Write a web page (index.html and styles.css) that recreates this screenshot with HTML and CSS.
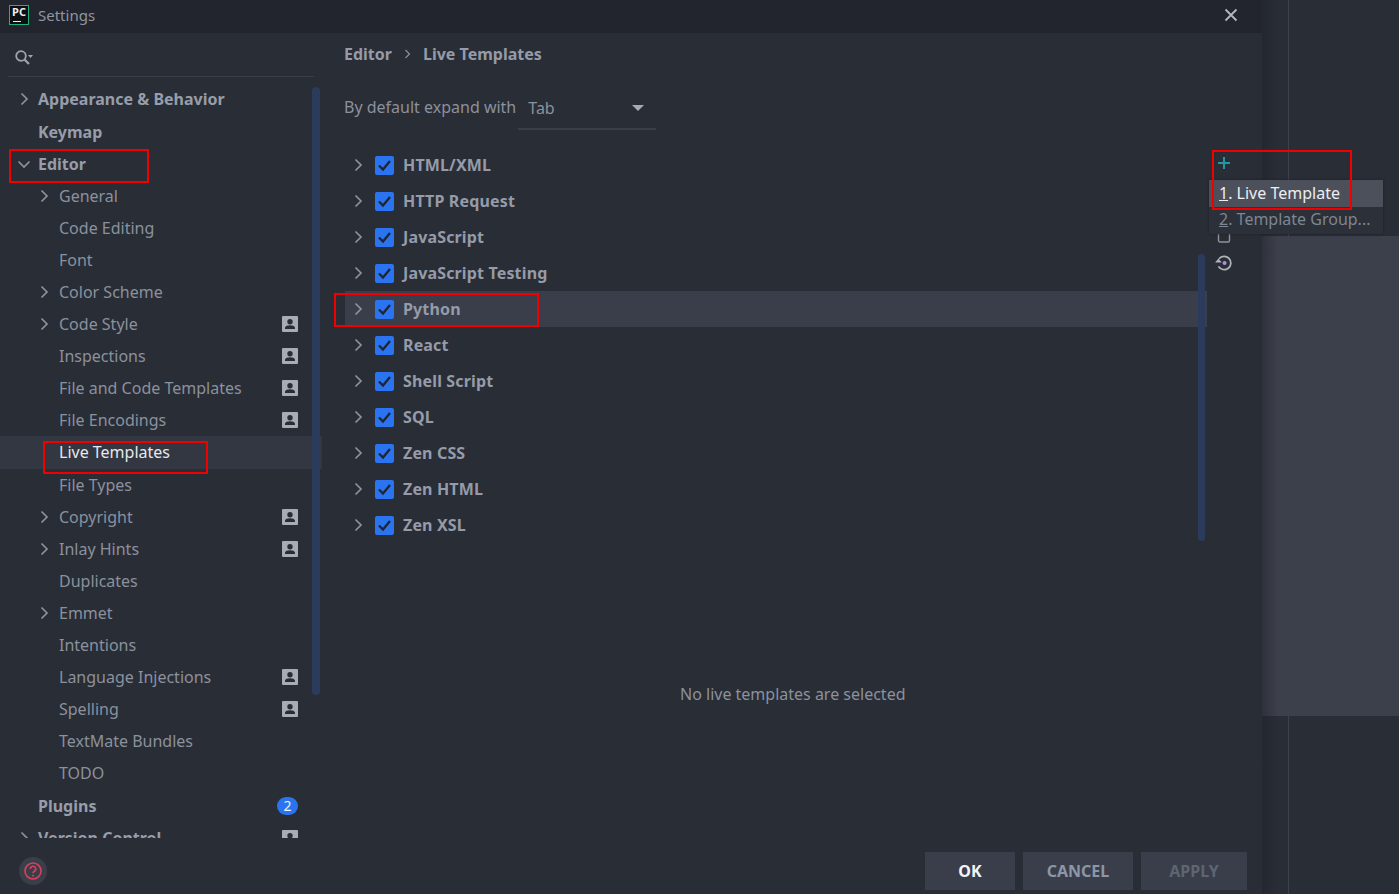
FILE: index.html
```html
<!DOCTYPE html>
<html lang="en">
<head>
  <meta charset="UTF-8" />
  <title>Settings</title>
  <link rel="stylesheet" href="styles.css">
</head>
<body>
  <svg class="defs" width="0" height="0">
    <symbol id="right" viewBox="0 0 10 14"><path d="M2.5 1.5 8 7l-5.500 5.500" fill="none" stroke="currentColor" stroke-width="1.700"/></symbol>
    <symbol id="down" viewBox="0 0 14 10"><path d="M1.500 2.500 7 8l5.500-5.500" fill="none" stroke="currentColor" stroke-width="1.700"/></symbol>
    <symbol id="user" viewBox="0 0 16 16"><path fill="#a9adb3" fill-rule="evenodd" d="M1 0h14a1 1 0 0 1 1 1v14a1 1 0 0 1-1 1H1a1 1 0 0 1-1-1V1a1 1 0 0 1 1-1zm7 3a2.700 2.700 0 1 0 0 5.400A2.700 2.700 0 0 0 8 3zM3 13h10v-1.200c0-1.700-2.500-2.500-5-2.500s-5 .8-5 2.500z"/></symbol>
    <symbol id="check" viewBox="0 0 19 19"><rect width="19" height="19" rx="2" fill="#2b74f1"/><path d="M4 9.500 8 13.500l7-8.500" fill="none" stroke="#1f2530" stroke-width="2.300"/></symbol>
  </svg>

  <div class="dialog">
    <div class="titlebar">
      <div class="logo"><span>PC</span><i></i></div>
      <span class="title">Settings</span>
      <svg class="close" width="14" height="14" viewBox="0 0 14 14"><path d="M1.500 1.500l11 11M12.500 1.500l-11 11" stroke="#b4b8be" stroke-width="1.800"/></svg>
    </div>

    <div class="body">
      <aside class="sidebar">
        <div class="search">
          <svg width="20" height="18" viewBox="0 0 20 18"><circle cx="7" cy="7" r="4.800" fill="none" stroke="#a0a5ad" stroke-width="1.800"/><path d="M10.500 10.500 15 15" stroke="#a0a5ad" stroke-width="2.200"/><path d="M14 6h5l-2.500 3z" fill="#a0a5ad"/></svg>
        </div>
        <div class="tree">
          <div class="node top"><svg class="arrow"><use href="#right"/></svg><span>Appearance &amp; Behavior</span></div>
          <div class="node top"><i class="arrow"></i><span>Keymap</span></div>
          <div class="node top"><svg class="arrow open"><use href="#down"/></svg><span>Editor</span></div>
          <div class="node"><svg class="arrow"><use href="#right"/></svg><span>General</span></div>
          <div class="node"><i class="arrow"></i><span>Code Editing</span></div>
          <div class="node"><i class="arrow"></i><span>Font</span></div>
          <div class="node"><svg class="arrow"><use href="#right"/></svg><span>Color Scheme</span></div>
          <div class="node"><svg class="arrow"><use href="#right"/></svg><span>Code Style</span><svg class="scope"><use href="#user"/></svg></div>
          <div class="node"><i class="arrow"></i><span>Inspections</span><svg class="scope"><use href="#user"/></svg></div>
          <div class="node"><i class="arrow"></i><span>File and Code Templates</span><svg class="scope"><use href="#user"/></svg></div>
          <div class="node"><i class="arrow"></i><span>File Encodings</span><svg class="scope"><use href="#user"/></svg></div>
          <div class="node active"><i class="arrow"></i><span>Live Templates</span></div>
          <div class="node"><i class="arrow"></i><span>File Types</span></div>
          <div class="node"><svg class="arrow"><use href="#right"/></svg><span>Copyright</span><svg class="scope"><use href="#user"/></svg></div>
          <div class="node"><svg class="arrow"><use href="#right"/></svg><span>Inlay Hints</span><svg class="scope"><use href="#user"/></svg></div>
          <div class="node"><i class="arrow"></i><span>Duplicates</span></div>
          <div class="node"><svg class="arrow"><use href="#right"/></svg><span>Emmet</span></div>
          <div class="node"><i class="arrow"></i><span>Intentions</span></div>
          <div class="node"><i class="arrow"></i><span>Language Injections</span><svg class="scope"><use href="#user"/></svg></div>
          <div class="node"><i class="arrow"></i><span>Spelling</span><svg class="scope"><use href="#user"/></svg></div>
          <div class="node"><i class="arrow"></i><span>TextMate Bundles</span></div>
          <div class="node"><i class="arrow"></i><span>TODO</span></div>
          <div class="node top"><i class="arrow"></i><span>Plugins</span><b class="badge">2</b></div>
          <div class="node top"><svg class="arrow"><use href="#right"/></svg><span>Version Control</span><svg class="scope"><use href="#user"/></svg></div>
        </div>
        <div class="side-footer">
          <div class="help">
            <svg width="20" height="20" viewBox="0 0 20 20"><circle cx="10" cy="10" r="8" fill="none" stroke="#d8415f" stroke-width="1.600"/><path d="M7.300 8a2.700 2.700 0 1 1 4 2.300c-.9.5-1.300 1-1.300 2" fill="none" stroke="#d8415f" stroke-width="1.600"/><circle cx="10" cy="14.700" r="1" fill="#d8415f"/></svg>
          </div>
        </div>
        <div class="side-scroll"></div>
      </aside>

      <main class="content">
        <div class="crumbs"><b>Editor</b><svg width="7" height="10" viewBox="0 0 7 10"><path d="M1.500 1 5.500 5l-4 4" fill="none" stroke="#8a909c" stroke-width="1.200"/></svg><b>Live Templates</b></div>
        <div class="expand">
          <span>By default expand with</span>
          <div class="combo"><span>Tab</span><i class="caret"></i></div>
        </div>

        <div class="list-wrap">
          <div class="groups">
            <div class="group"><svg class="arrow"><use href="#right"/></svg><svg class="box"><use href="#check"/></svg><b>HTML/XML</b></div>
            <div class="group"><svg class="arrow"><use href="#right"/></svg><svg class="box"><use href="#check"/></svg><b>HTTP Request</b></div>
            <div class="group"><svg class="arrow"><use href="#right"/></svg><svg class="box"><use href="#check"/></svg><b>JavaScript</b></div>
            <div class="group"><svg class="arrow"><use href="#right"/></svg><svg class="box"><use href="#check"/></svg><b>JavaScript Testing</b></div>
            <div class="group hover"><svg class="arrow"><use href="#right"/></svg><svg class="box"><use href="#check"/></svg><b>Python</b></div>
            <div class="group"><svg class="arrow"><use href="#right"/></svg><svg class="box"><use href="#check"/></svg><b>React</b></div>
            <div class="group"><svg class="arrow"><use href="#right"/></svg><svg class="box"><use href="#check"/></svg><b>Shell Script</b></div>
            <div class="group"><svg class="arrow"><use href="#right"/></svg><svg class="box"><use href="#check"/></svg><b>SQL</b></div>
            <div class="group"><svg class="arrow"><use href="#right"/></svg><svg class="box"><use href="#check"/></svg><b>Zen CSS</b></div>
            <div class="group"><svg class="arrow"><use href="#right"/></svg><svg class="box"><use href="#check"/></svg><b>Zen HTML</b></div>
            <div class="group"><svg class="arrow"><use href="#right"/></svg><svg class="box"><use href="#check"/></svg><b>Zen XSL</b></div>
            <div class="list-scroll"></div>
          </div>
          <div class="tools">
            <svg width="14" height="14" viewBox="0 0 14 14"><path d="M7 1v12M1 7h12" stroke="#1f97a5" stroke-width="2"/></svg>
            <i class="tool-gap"></i>
            <i class="tool-gap"></i>
            <svg width="14" height="14" viewBox="0 0 14 14"><rect x="1.500" y="1" width="11" height="11" rx="1.500" fill="none" stroke="#8f949b" stroke-width="1.400"/></svg>
            <svg width="20" height="20" viewBox="0 0 18 18"><path d="M4.500 5.200A6 6 0 1 1 4 12" fill="none" stroke="#b0b4ba" stroke-width="1.600"/><path d="M1 8.500h6L4 5z" fill="#b0b4ba"/><circle cx="9.500" cy="9" r="1.800" fill="#b58be0"/></svg>
          </div>
        </div>

        <div class="empty">No live templates are selected</div>

        <div class="actions">
          <button class="ok">OK</button>
          <button class="cancel">CANCEL</button>
          <button class="apply">APPLY</button>
        </div>
      </main>
    </div>
  </div>

  <div class="backdrop">
    <div class="back-top"></div>
    <div class="back-band"></div>
    <div class="back-rest"></div>
    <div class="back-line"></div>
  </div>

  <div class="popup">
    <div class="popup-item on"><u>1</u>. Live Template</div>
    <div class="popup-item"><u>2</u>. Template Group...</div>
  </div>

  <div class="mark mark-editor"></div>
  <div class="mark mark-live"></div>
  <div class="mark mark-python"></div>
  <div class="mark mark-plus"></div>
</body>
</html>
```

FILE: styles.css
```css
* {
  margin: 0;
  padding: 0;
  box-sizing: border-box;
}
body {
  position: relative;
  display: flex;
  width: 1399px;
  height: 894px;
  overflow: hidden;
  background: #292d36;
  color: #8b919d;
  font-family: "Noto Sans", "Open Sans", sans-serif;
  font-size: 16px;
}
.defs {
  position: absolute;
}
b {
  font-weight: 700;
}

/* dialog */
.dialog {
  display: flex;
  flex-direction: column;
  width: 1262px;
  height: 894px;
}
.titlebar {
  display: flex;
  align-items: center;
  flex: none;
  height: 33px;
  padding: 0 24px 4px 9px;
  background: #22252d;
}
.logo {
  position: relative;
  width: 20px;
  height: 20px;
  margin: 1px 9px 0 0;
  background: #0d0f12;
  border: 1px solid #21b27c;
}
.logo span {
  display: block;
  padding-top: 1px;
  color: #eee;
  font-size: 11px;
  font-weight: 700;
  line-height: 10px;
  text-align: center;
}
.logo i {
  position: absolute;
  left: 3px;
  bottom: 2px;
  width: 8px;
  height: 1px;
  background: #eee;
}
.title {
  flex: 1;
  color: #8f95a1;
  font-size: 15px;
}
.body {
  display: flex;
  flex: 1;
  min-height: 0;
}

/* left tree */
.sidebar {
  position: relative;
  display: flex;
  flex-direction: column;
  flex: none;
  width: 322px;
}
.search {
  display: flex;
  align-items: center;
  height: 44px;
  margin: 0 8px 6.400px;
  padding: 0 0 0 6px;
  border-bottom: 1px solid #3a3e49;
}
.search svg {
  margin-top: 7px;
}
.tree {
  height: 754.600px;
  overflow: hidden;
}
.node {
  display: flex;
  align-items: center;
  height: 32.100px;
  padding: 0 24px 0 39px;
  white-space: nowrap;
}
.node .arrow {
  flex: none;
  width: 10px;
  height: 14px;
  margin-right: 10px;
  color: #8d929b;
}
.node.top {
  padding-left: 19px;
  color: #979daa;
  font-weight: 700;
}
.node.top .arrow {
  margin-right: 9px;
}
.node .arrow.open {
  width: 14px;
  height: 10px;
  margin: 0 7px 0 -2px;
}
.node.active {
  background: #333741;
  color: #e6e8ec;
}
.scope {
  flex: none;
  width: 16px;
  height: 16px;
  margin-left: auto;
}
.badge {
  flex: none;
  width: 21px;
  height: 18px;
  margin-left: auto;
  border-radius: 9px;
  background: #2b74f1;
  color: #eef3ff;
  font-size: 14px;
  font-weight: 400;
  line-height: 18px;
  text-align: center;
}
.side-footer {
  padding: 19px 0 0 19px;
}
.help {
  display: flex;
  align-items: center;
  justify-content: center;
  width: 28px;
  height: 28px;
  border-radius: 50%;
  background: #3a3e49;
}
.side-scroll {
  position: absolute;
  top: 54px;
  left: 312px;
  width: 8px;
  height: 608px;
  border-radius: 4px;
  background: #2a3b5c;
}

/* right panel */
.content {
  display: flex;
  flex-direction: column;
  flex: 1;
  min-width: 0;
  padding-left: 22px;
}
.crumbs {
  display: flex;
  align-items: center;
  gap: 12px;
  height: 41px;
  color: #959ba8;
}
.expand {
  display: flex;
  align-items: center;
  height: 56px;
  padding-top: 10px;
}
.combo {
  display: flex;
  align-items: center;
  justify-content: space-between;
  width: 138px;
  height: 46px;
  margin: 0 0 0 2px;
  padding: 4px 12px 0 10px;
  border-bottom: 2px solid #3a3e49;
}
.caret {
  border-left: 6px solid transparent;
  border-right: 6px solid transparent;
  border-top: 6px solid #a6abb3;
}
.list-wrap {
  display: flex;
  margin-top: 17px;
  padding-left: 1px;
}
.groups {
  position: relative;
  flex: none;
  width: 862px;
}
.group {
  display: flex;
  align-items: center;
  height: 36px;
  padding-left: 8px;
  color: #959ba8;
  letter-spacing: 0.150px;
}
.group .arrow {
  flex: none;
  width: 10px;
  height: 14px;
  margin-right: 12px;
  color: #8d929b;
}
.group .box {
  flex: none;
  width: 19px;
  height: 19px;
  margin-right: 9px;
}
.group.hover {
  background: #393e4a;
}
.list-scroll {
  position: absolute;
  top: 107px;
  right: 2px;
  width: 7px;
  height: 287px;
  border-radius: 4px;
  background: #2a3b5c;
}
.tools {
  display: flex;
  flex-direction: column;
  align-items: center;
  width: 34px;
  padding-top: 3px;
}
.tools svg {
  flex: none;
  height: 26px;
}
.tool-gap {
  height: 24px;
}
.empty {
  flex: 1;
  padding: 140px 0 0 336px;
}
.actions {
  display: flex;
  justify-content: flex-end;
  gap: 8px;
  height: 42px;
  padding-right: 15px;
}
.actions button {
  height: 38px;
  border: 0;
  background: #3a3e4a;
  font-family: inherit;
  font-size: 16px;
  font-weight: 700;
}
.ok {
  width: 90px;
  color: #f1f3f6;
}
.cancel {
  width: 110px;
  color: #8b96a8;
}
.apply {
  width: 106px;
  color: #5e6572;
}

/* what is behind the dialog */
.backdrop {
  position: relative;
  display: flex;
  flex-direction: column;
  flex: 1;
}
.backdrop::before {
  content: "";
  position: absolute;
  top: 0;
  bottom: 0;
  left: 0;
  width: 16px;
  background: linear-gradient(to right, rgba(30, 32, 38, 0.45), rgba(30, 32, 38, 0));
}
.back-top {
  height: 236px;
}
.back-band {
  height: 480px;
  background: #3c404b;
}
.back-rest {
  flex: 1;
}
.back-line {
  position: absolute;
  top: 0;
  bottom: 0;
  left: 26px;
  width: 1px;
  background: #3d414c;
}

/* + popup */
.popup {
  position: absolute;
  top: 180px;
  left: 1209px;
  width: 174px;
  height: 54px;
  background: #2c3039;
  box-shadow: 0 0 2px #1c1e24;
}
.popup-item {
  height: 26px;
  padding-left: 10px;
  color: #7d8694;
  font-size: 16px;
  line-height: 24px;
  white-space: nowrap;
}
.popup-item.on {
  height: 27px;
  background: #4c505b;
  color: #eceef2;
  line-height: 27px;
}

/* red marks drawn over the screenshot */
.mark {
  position: absolute;
  border: 2px solid #f00000;
}
.mark-editor {
  top: 149px;
  left: 9px;
  width: 140px;
  height: 34px;
}
.mark-live {
  top: 441px;
  left: 43px;
  width: 165px;
  height: 33px;
}
.mark-python {
  top: 293px;
  left: 334px;
  width: 205px;
  height: 34px;
}
.mark-plus {
  top: 150px;
  left: 1212px;
  width: 140px;
  height: 60px;
}
```
